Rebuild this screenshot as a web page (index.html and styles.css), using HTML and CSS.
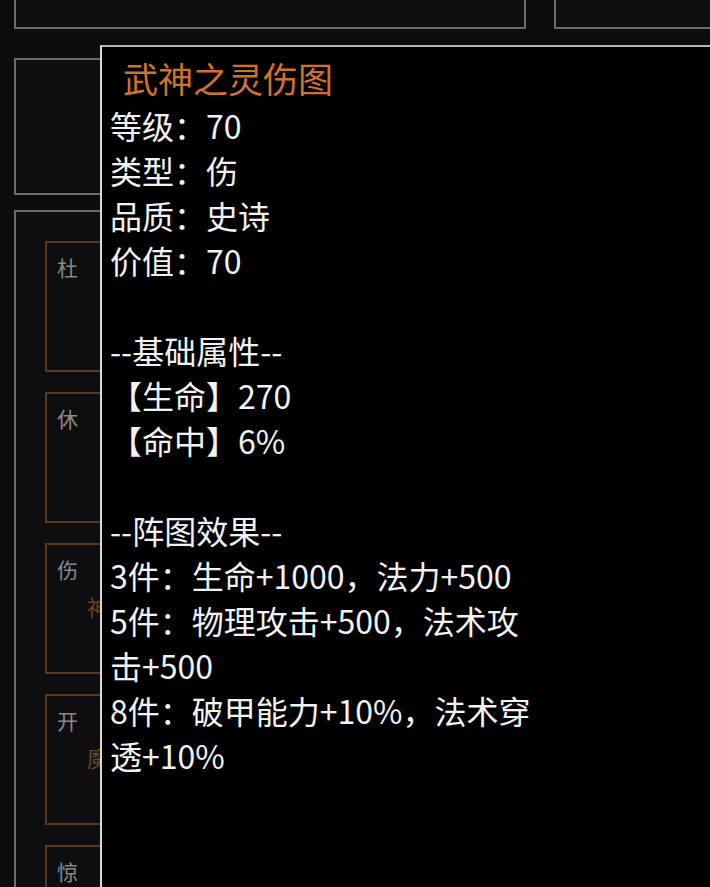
FILE: index.html
```html
<!DOCTYPE html>
<html>
<head>
    <title>阵图</title>
    <meta http-equiv="Content-Type" content="text/html; charset=utf-8">
    <meta name="viewport" content="width=device-width, initial-scale=1">
    <link rel="stylesheet" href="styles.css">
</head>
<body>
    <div class="board">
        <div class="row-top">
            <div class="card card-wide"></div>
            <div class="card card-side"></div>
        </div>
        <div class="card card-info"></div>
        <div class="card card-gates">
            <div class="gate">
                <span class="gate-name">杜</span>
            </div>
            <div class="gate">
                <span class="gate-name">休</span>
            </div>
            <div class="gate">
                <span class="gate-name">伤</span>
                <span class="gate-item">神之灵伤图</span>
            </div>
            <div class="gate">
                <span class="gate-name">开</span>
                <span class="gate-item">魔神之灵</span>
            </div>
            <div class="gate">
                <span class="gate-name">惊</span>
            </div>
        </div>
    </div>

    <!-- item tooltip -->
    <div class="tooltip">
        <div class="tooltip-title">武神之灵伤图</div>
        <div class="tooltip-body">
            <div>等级：70</div>
            <div>类型：伤</div>
            <div>品质：史诗</div>
            <div>价值：70</div>
            <div class="blank"></div>
            <div>--基础属性--</div>
            <div>【生命】270</div>
            <div>【命中】6%</div>
            <div class="blank"></div>
            <div>--阵图效果--</div>
            <div>3件：生命+1000，法力+500</div>
            <div>5件：物理攻击+500，法术攻击+500</div>
            <div>8件：破甲能力+10%，法术穿透+10%</div>
        </div>
    </div>
</body>
</html>
```

FILE: styles.css
```css
body, html {
    height: 100%;
    margin: 0;
    background: #0c0c0f;
    font-family: "Noto Sans CJK SC", "Noto Sans", sans-serif;
    overflow: hidden;
}

.board {
    margin-top: -71px;
    padding-left: 14px;
    display: flex;
    flex-direction: column;
}

.row-top {
    display: flex;
    gap: 28px;
}

.card {
    box-sizing: border-box;
    border: 2px solid #6c6c6e;
    background: #0e0e11;
}

.card-wide {
    width: 512px;
    height: 100px;
    flex: none;
}

.card-side {
    width: 300px;
    height: 100px;
    flex: none;
}

.card-info {
    width: 512px;
    height: 137px;
    margin-top: 29px;
}

.card-gates {
    width: 512px;
    margin-top: 15px;
    padding: 29px 0 0 29px;
    display: flex;
    flex-direction: column;
    gap: 20px;
}

/* the gate cells run on under the tooltip, only their left part shows */
.gate {
    box-sizing: border-box;
    width: 57px;
    height: 131px;
    border: 2px solid #5c381c;
    border-right: none;
    padding: 12px 10px;
    display: grid;
    overflow: hidden;
}

.gate-name,
.gate-item {
    grid-area: 1 / 1;
}

.gate-name {
    align-self: start;
    color: #8a8a8c;
    font-size: 21px;
    line-height: 25px;
}

.gate-item {
    align-self: center;
    padding-left: 30px;
    margin-top: -6px;
    color: #6e4321;
    font-size: 22px;
    white-space: nowrap;
}

.tooltip {
    position: absolute;
    left: 100px;
    top: 45px;
    right: 0;
    bottom: 0;
    background: #000;
    border-top: 2px solid #b4b4b6;
    border-left: 2px solid #d8d8d8;
    padding: 8px 0 0 8px;
}

.tooltip-title {
    color: #d0722c;
    font-size: 35px;
    line-height: 45px;
    padding-left: 13px;
    margin-bottom: 3px;
}

.tooltip-body {
    width: 435px;
    color: #f2f2f2;
    font-size: 32px;
    line-height: 45px;
}

.blank {
    height: 45px;
}
```
